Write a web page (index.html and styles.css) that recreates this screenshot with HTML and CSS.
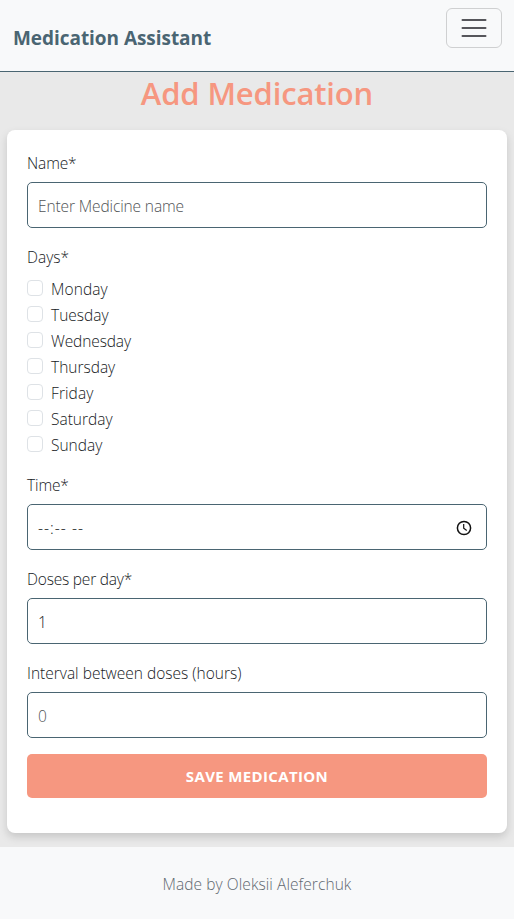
FILE: index.html
```html
<!DOCTYPE html>
<html lang="en">
<head>
<meta charset="utf-8">
<title>Medication Assistant</title>
<link rel="stylesheet" href="styles.css">
</head>
<body>
<header class="navbar">
  <a class="brand">Medication Assistant</a>
  <button class="toggler" type="button" aria-label="Toggle navigation">
    <svg width="30" height="30" viewBox="0 0 30 30"><path d="M3.5 7h23M3.5 15h23M3.5 23h23" stroke="#56565b" stroke-width="2" stroke-linecap="round"/></svg>
  </button>
</header>
<main>
  <h1>Add Medication</h1>
  <form class="card">
    <div class="field"><label class="snug">Name*</label><div class="control placeholder"><span class="snug">Enter Medicine name</span></div></div>
    <div class="field">
      <label>Days*</label>
      <div class="days">
        <div class="check"><i class="box"></i><span class="wide">Monday</span></div>
        <div class="check"><i class="box"></i><span>Tuesday</span></div>
        <div class="check"><i class="box"></i><span class="snug">Wednesday</span></div>
        <div class="check"><i class="box"></i><span>Thursday</span></div>
        <div class="check"><i class="box"></i><span class="wide">Friday</span></div>
        <div class="check"><i class="box"></i><span>Saturday</span></div>
        <div class="check"><i class="box"></i><span>Sunday</span></div>
      </div>
    </div>
    <div class="field"><label class="snug">Time*</label><div class="control"><span class="time">--:-- --</span>
      <svg class="clock" width="16" height="16" viewBox="0 0 16 16" fill="none" stroke="#111"><circle cx="8" cy="8" r="6.6" stroke-width="1.5"/><path d="M7.7 4v4.3l3 2.2" stroke-width="1.2"/></svg>
    </div></div>
    <div class="field"><label class="tight">Doses per day*</label><div class="control"><span>1</span></div></div>
    <div class="field"><label>Interval between doses (hours)</label><div class="control placeholder"><span>0</span></div></div>
    <button class="save" type="button"><span>SAVE MEDICATION</span></button>
  </form>
</main>
<footer><span>Made by Oleksii Aleferchuk</span></footer>
</body>
</html>
```
FILE: styles.css
```css
* { box-sizing: border-box; }
body {
  margin: 0;
  min-height: 919px;
  display: flex;
  flex-direction: column;
  background: #e9e9e9;
  color: #16191c;
  font: 300 15.5px/24px "Open Sans", "Noto Sans", sans-serif;
}
.navbar {
  height: 72px;
  padding: 8px 12px 0 13px;
  display: flex;
  justify-content: space-between;
  align-items: flex-start;
  background: #f8f9fa;
  border-bottom: 1px solid #4a6572;
}
.brand {
  margin-top: 15px;
  font-size: 19px;
  line-height: 30px;
  font-weight: 700;
  letter-spacing: -.05px;
  color: #4a6572;
}
.toggler {
  width: 56px;
  height: 40px;
  padding: 0;
  display: flex;
  align-items: center;
  justify-content: center;
  background: transparent;
  border: 1px solid #cfd0d1;
  border-radius: 6px;
}
main { height: 775px; }
h1 {
  margin: 0;
  height: 58px;
  text-align: center;
  font-size: 31px;
  line-height: 42px;
  font-weight: 600;
  letter-spacing: -.15px;
  color: #f69780;
}
.card {
  width: 500px;
  height: 703px;
  margin: 0 auto;
  padding: 20px;
  background: #fff;
  border-radius: 8px;
  box-shadow: 0 4px 8px rgba(0, 0, 0, .15);
}
.field { margin-bottom: 16px; }
label { display: block; padding-top: 1px; margin-bottom: 7px; }
.control {
  height: 46px;
  padding: 1px 14px 0 10px;
  display: flex;
  align-items: center;
  justify-content: space-between;
  border: 1px solid #4a6572;
  border-radius: 5px;
}
.placeholder { color: #505356; }
.snug { letter-spacing: -.12px; }
.tight { letter-spacing: -.2px; }
.wide { letter-spacing: .1px; }
.time { letter-spacing: 1.05px; }
.days {
  display: flex;
  flex-direction: column;
  gap: 2px;
}
.check {
  height: 24px;
  display: flex;
  align-items: center;
  gap: 8px;
}
.check span { padding-top: 2px; }
.box {
  width: 16px;
  height: 16px;
  border: 1px solid #dee2e6;
  border-radius: 4px;
}
.save {
  display: block;
  width: 100%;
  height: 44px;
  padding: 0;
  border: 0;
  border-radius: 5px;
  background: #f69780;
  color: #fff;
  font-family: inherit;
  font-size: 15px;
  font-weight: 700;
  letter-spacing: .36px;
}
footer {
  height: 72px;
  padding-top: 25px;
  text-align: center;
  background: #f8f9fa;
  color: #5f6870;
  letter-spacing: .07px;
}
```
